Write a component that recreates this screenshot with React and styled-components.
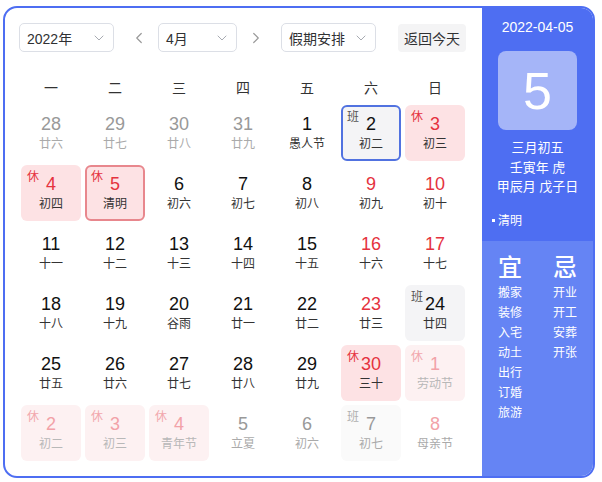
import React from "react";
import styled, { createGlobalStyle } from "styled-components";
import { ChevronDown, ChevronLeft, ChevronRight } from "lucide-react";

const GlobalStyle = createGlobalStyle`
body {
    margin: 0;
    background: #fff;
    font-family: "Liberation Sans", "Noto Sans CJK SC", sans-serif;
}
* { box-sizing: border-box; }
`;

const weekdays = ["一", "二", "三", "四", "五", "六", "日"];

// tag: "rest" (休) or "work" (班); other: not in current month; red: weekend colour
const days = [
    { n: 28, l: "廿六", other: true },
    { n: 29, l: "廿七", other: true },
    { n: 30, l: "廿八", other: true },
    { n: 31, l: "廿九", other: true },
    { n: 1, l: "愚人节" },
    { n: 2, l: "初二", tag: "work", today: true },
    { n: 3, l: "初三", tag: "rest", red: true },
    { n: 4, l: "初四", tag: "rest", red: true },
    { n: 5, l: "清明", tag: "rest", red: true, selected: true },
    { n: 6, l: "初六" },
    { n: 7, l: "初七" },
    { n: 8, l: "初八" },
    { n: 9, l: "初九", red: true },
    { n: 10, l: "初十", red: true },
    { n: 11, l: "十一" },
    { n: 12, l: "十二" },
    { n: 13, l: "十三" },
    { n: 14, l: "十四" },
    { n: 15, l: "十五" },
    { n: 16, l: "十六", red: true },
    { n: 17, l: "十七", red: true },
    { n: 18, l: "十八" },
    { n: 19, l: "十九" },
    { n: 20, l: "谷雨" },
    { n: 21, l: "廿一" },
    { n: 22, l: "廿二" },
    { n: 23, l: "廿三", red: true },
    { n: 24, l: "廿四", tag: "work" },
    { n: 25, l: "廿五" },
    { n: 26, l: "廿六" },
    { n: 27, l: "廿七" },
    { n: 28, l: "廿八" },
    { n: 29, l: "廿九" },
    { n: 30, l: "三十", tag: "rest", red: true },
    { n: 1, l: "劳动节", tag: "rest", red: true, other: true },
    { n: 2, l: "初二", tag: "rest", red: true, other: true },
    { n: 3, l: "初三", tag: "rest", red: true, other: true },
    { n: 4, l: "青年节", tag: "rest", red: true, other: true },
    { n: 5, l: "立夏", other: true },
    { n: 6, l: "初六", other: true },
    { n: 7, l: "初七", tag: "work", other: true },
    { n: 8, l: "母亲节", red: true, other: true },
];

const good = ["搬家", "装修", "入宅", "动土", "出行", "订婚", "旅游"];
const bad = ["开业", "开工", "安葬", "开张"];

function App() {
    return (
        <>
            <GlobalStyle />
            <Widget>
                <Main>
                    <Toolbar>
                        <Select $w={95}>
                            <span>2022年</span>
                            <ChevronDown size={16} strokeWidth={1.5} color="#a8abb2" />
                        </Select>
                        <ArrowBtn $side="left">
                            <ChevronLeft size={18} strokeWidth={1.6} color="#999" />
                        </ArrowBtn>
                        <Select $w={79}>
                            <span>4月</span>
                            <ChevronDown size={16} strokeWidth={1.5} color="#a8abb2" />
                        </Select>
                        <ArrowBtn $side="right">
                            <ChevronRight size={18} strokeWidth={1.6} color="#999" />
                        </ArrowBtn>
                        <Select $w={95}>
                            <span>假期安排</span>
                            <ChevronDown size={16} strokeWidth={1.5} color="#a8abb2" />
                        </Select>
                        <TodayBtn>返回今天</TodayBtn>
                    </Toolbar>
                    <WeekHeader>
                        {weekdays.map((w) => (
                            <span key={w}>{w}</span>
                        ))}
                    </WeekHeader>
                    <Grid>
                        {days.map((d, i) => (
                            <Cell
                                key={i}
                                $tag={d.tag}
                                $other={d.other}
                                $selected={d.selected}
                                $today={d.today}
                            >
                                {d.tag && (
                                    <Tag $tag={d.tag} $other={d.other}>
                                        {d.tag === "rest" ? "休" : "班"}
                                    </Tag>
                                )}
                                <DayNum $red={d.red} $other={d.other}>{d.n}</DayNum>
                                <Lunar $other={d.other} $tag={d.tag}>{d.l}</Lunar>
                            </Cell>
                        ))}
                    </Grid>
                </Main>
                <Side>
                    <SideTop>
                        <DateText>2022-04-05</DateText>
                        <BigDay>5</BigDay>
                        <LunarInfo>
                            <div>三月初五</div>
                            <div>壬寅年 虎</div>
                            <div>甲辰月 戊子日</div>
                        </LunarInfo>
                        <Festival>
                            <Dot />清明
                        </Festival>
                    </SideTop>
                    <SideBottom>
                        <AdviceCol $w={55}>
                            <AdviceHead>宜</AdviceHead>
                            {good.map((g) => (
                                <AdviceItem key={g}>{g}</AdviceItem>
                            ))}
                        </AdviceCol>
                        <AdviceCol $w={40}>
                            <AdviceHead>忌</AdviceHead>
                            {bad.map((b) => (
                                <AdviceItem key={b}>{b}</AdviceItem>
                            ))}
                        </AdviceCol>
                    </SideBottom>
                </Side>
            </Widget>
        </>
    );
}

export default App;

const Widget = styled.div`
margin: 6px 0 0 3px;
width: 592px;
height: 472px;
border: 2px solid #4e6ef2;
border-radius: 14px;
overflow: hidden;
display: flex;
background: #fff;
`;

const Main = styled.div`
flex: 1;
padding: 15px 16px 0 16px;
`;

const Toolbar = styled.div`
display: flex;
align-items: center;
margin-left: -2px;
height: 29px;
`;

const Select = styled.div`
width: ${(p) => p.$w}px;
height: 29px;
border: 1px solid #dcdfe6;
border-radius: 5px;
display: flex;
align-items: center;
justify-content: space-between;
padding: 0 6px 0 7px;
font-size: 14px;
color: #303133;
`;

const ArrowBtn = styled.div`
width: 44px;
height: 29px;
display: flex;
align-items: center;
justify-content: center;
padding-left: ${(p) => (p.$side === "left" ? "6px" : "0")};
padding-right: ${(p) => (p.$side === "right" ? "6px" : "0")};
`;

const TodayBtn = styled.div`
margin-left: auto;
width: 68px;
height: 28px;
border-radius: 4px;
background: #f4f4f5;
display: flex;
align-items: center;
justify-content: center;
font-size: 14px;
color: #303133;
`;

const WeekHeader = styled.div`
display: grid;
grid-template-columns: repeat(7, 60px);
column-gap: 4px;
height: 34px;
margin-top: 18px;
align-items: center;
justify-items: center;
font-size: 14px;
color: #333;
`;

const Grid = styled.div`
display: grid;
grid-template-columns: repeat(7, 60px);
grid-auto-rows: 56px;
gap: 4px;
margin-top: 1px;
`;

const cellBg = (p) => {
    if (p.$tag === "rest") return p.$other ? "#fdf1f2" : "#fde2e4";
    if (p.$tag === "work") return p.$other ? "#fafafa" : "#f4f4f6";
    return "transparent";
};

const cellBorder = (p) => {
    if (p.$selected) return "#e8878d";
    if (p.$today) return "#5172e0";
    return "transparent";
};

const Cell = styled.div`
position: relative;
border-radius: 6px;
border: 2px solid ${cellBorder};
background: ${cellBg};
display: flex;
flex-direction: column;
align-items: center;
justify-content: center;
`;

const Tag = styled.span`
position: absolute;
top: 3px;
left: 4px;
font-size: 12px;
line-height: 14px;
color: ${(p) =>
        p.$tag === "rest"
            ? p.$other ? "#f2a7ad" : "#e5323e"
            : p.$other ? "#b0b0b0" : "#555"};
`;

const DayNum = styled.div`
font-size: 18px;
line-height: 20px;
color: ${(p) =>
        p.$red
            ? p.$other ? "#f2a2a8" : "#e5323e"
            : p.$other ? "#999" : "#111"};
`;

const Lunar = styled.div`
font-size: 12px;
line-height: 16px;
margin-top: 2px;
color: ${(p) => (p.$other ? (p.$tag === "rest" ? "#b8b8b8" : "#aaa") : "#333")};
`;

const Side = styled.div`
width: 111px;
flex-shrink: 0;
display: flex;
flex-direction: column;
color: #fff;
`;

const SideTop = styled.div`
height: 233px;
background: #4e6ef2;
padding-top: 9px;
display: flex;
flex-direction: column;
`;

const DateText = styled.div`
text-align: center;
font-size: 14px;
line-height: 20px;
`;

const BigDay = styled.div`
margin: 14px auto 0;
width: 79px;
height: 79px;
border-radius: 8px;
background: #a5b5f8;
display: flex;
align-items: center;
justify-content: center;
font-size: 52px;
`;

const LunarInfo = styled.div`
margin-top: 8px;
text-align: center;
font-size: 13px;
line-height: 19.5px;
`;

const Festival = styled.div`
margin-top: 14px;
padding-left: 10px;
font-size: 12px;
line-height: 20px;
display: flex;
align-items: center;
`;

const Dot = styled.span`
width: 3px;
height: 3px;
background: #fff;
margin-right: 3px;
`;

const SideBottom = styled.div`
flex: 1;
background: #6584f4;
padding: 14px 0 0 16px;
display: flex;
`;

const AdviceCol = styled.div`
width: ${(p) => p.$w}px;
flex-shrink: 0;
display: flex;
flex-direction: column;
`;

const AdviceHead = styled.div`
font-size: 24px;
line-height: 26px;
font-weight: 500;
margin-bottom: 2px;
`;

const AdviceItem = styled.div`
font-size: 12px;
line-height: 20px;
`;
